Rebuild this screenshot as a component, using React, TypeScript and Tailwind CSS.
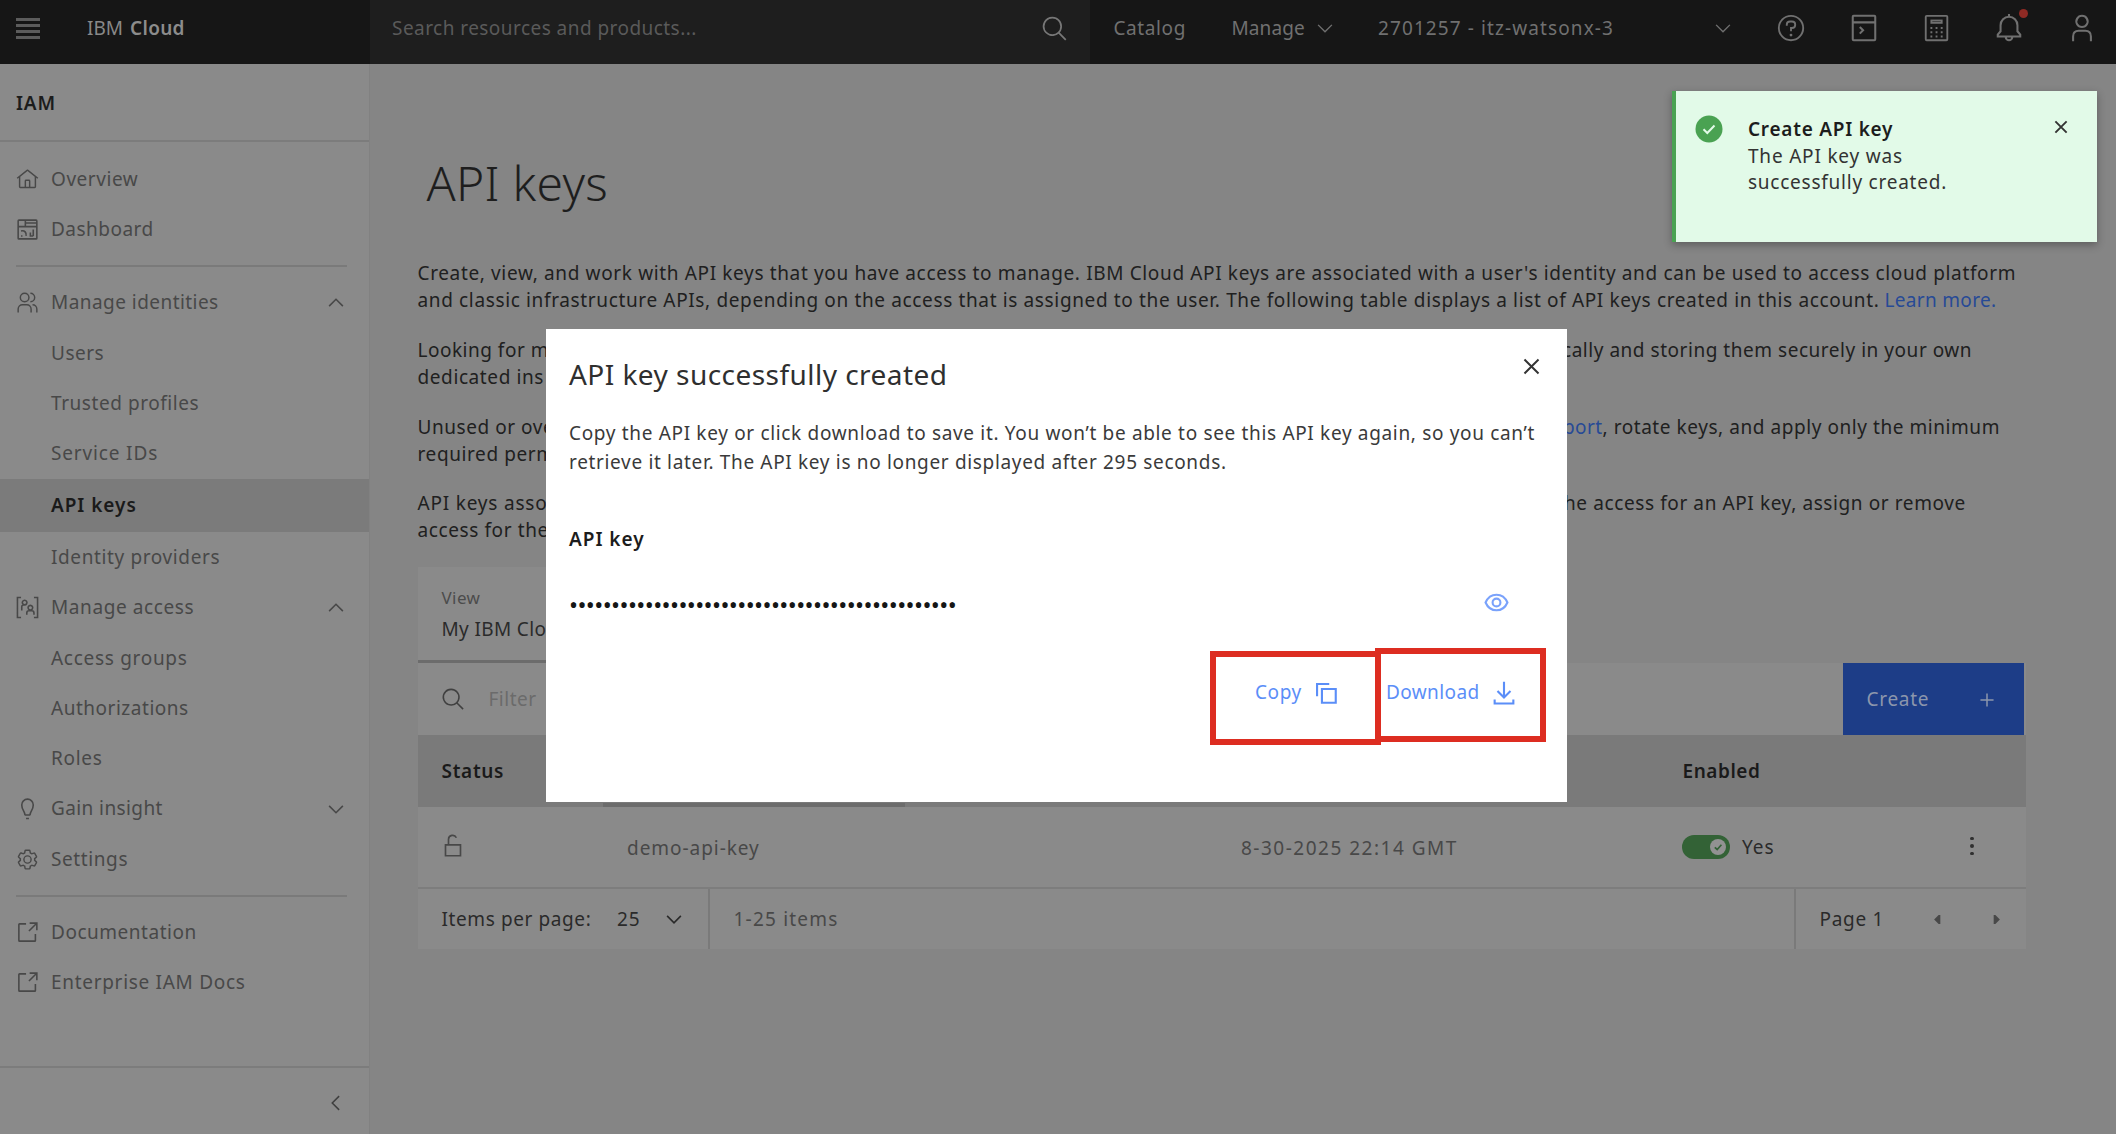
import type { ReactNode } from "react";

function Icon({ className, children }: { className: string; children: ReactNode }) {
  return (
    <svg viewBox="0 0 32 32" fill="currentColor" className={`shrink-0 ${className}`}>
      {children}
    </svg>
  );
}

function Lines({ className, d, width = 2.2 }: { className: string; d: string; width?: number }) {
  return (
    <svg viewBox="0 0 32 32" fill="none" stroke="currentColor" strokeWidth={width} className={`shrink-0 ${className}`}>
      <path d={d} />
    </svg>
  );
}

const SEARCH = "M29,27.5859l-7.5521-7.5521a11.0177,11.0177,0,1,0-1.4141,1.4141L27.5859,29ZM4,13a9,9,0,1,1,9,9A9.01,9.01,0,0,1,4,13Z";
const CHEVRON_DOWN = "M5 11L16 22L27 11";
const CHEVRON_UP = "M5 21L16 10L27 21";

const homeIcon = (
  <Icon className="size-[23px]">
    <path d="M16.6123,2.2138a1.01,1.01,0,0,0-1.2427,0L1,13.4194l1.2427,1.5717L4,13.621V26a2.0041,2.0041,0,0,0,2,2H26a2.0037,2.0037,0,0,0,2-2V13.63L29.7573,15,31,13.4282ZM18,26H14V18h4Zm2,0V18a2.0023,2.0023,0,0,0-2-2H14a2.002,2.002,0,0,0-2,2v8H6V12.0615l10-7.79,10,7.8005V26Z" />
  </Icon>
);
const dashboardIcon = (
  <Lines
    className="size-[23px]"
    d="M4 3H28Q29 3 29 4V28Q29 29 28 29H4Q3 29 3 28V4Q3 3 4 3ZM3 12H29M13 3V12M13 7H29M24 16V25M20 20V25H24M7 18C12 17 15 20 14 25M7 25H9"
  />
);
const usersIcon = (
  <Icon className="size-[23px]">
    <path d="M30 30h-2v-5a5.006 5.006 0 00-5-5v-2a7.008 7.008 0 017 7zM22 30h-2v-5a5.006 5.006 0 00-5-5H9a5.006 5.006 0 00-5 5v5H2v-5a7.008 7.008 0 017-7h6a7.008 7.008 0 017 7zM20 2v2a5 5 0 010 10v2a7 7 0 000-14zM12 4a5 5 0 11-5 5 5 5 0 015-5m0-2a7 7 0 107 7 7 7 0 00-7-7z" />
  </Icon>
);
const accessIcon = (
  <Lines
    className="size-[23px]"
    d="M7 2H2V30H7M25 2H30V30H25M12 6a3.2 3.2 0 1 0 .01 0M8 20V15Q8 12.500 10.500 12.500H13M20 13a3.200 3.200 0 1 0 .01 0M15 26V23.500Q15 20.500 18 20.500H22Q25 20.500 25 23.500V26"
  />
);
const bulbIcon = (
  <Lines className="size-[23px]" d="M12 25H20M14 30H18M12.500 25C12.500 20 8 18 8 11A8 8 0 0 1 24 11C24 18 19.500 20 19.500 25" />
);
const settingsIcon = (
  <Icon className="size-[23px]">
    <path d="M27,16.76c0-.25,0-.5,0-.76s0-.51,0-.77l1.92-1.68A2,2,0,0,0,29.3,11L26.94,7a2,2,0,0,0-1.73-1,2,2,0,0,0-.64.1l-2.43.82a11.35,11.35,0,0,0-1.31-.75l-.51-2.52a2,2,0,0,0-2-1.61H13.64a2,2,0,0,0-2,1.61l-.51,2.52a11.48,11.48,0,0,0-1.32.75L7.43,6.06A2,2,0,0,0,6.79,6,2,2,0,0,0,5.06,7L2.7,11a2,2,0,0,0,.41,2.51L5,15.24c0,.25,0,.5,0,.76s0,.51,0,.77L3.11,18.45A2,2,0,0,0,2.7,21L5.06,25a2,2,0,0,0,1.73,1,2,2,0,0,0,.64-.1l2.43-.82a11.35,11.35,0,0,0,1.31.75l.51,2.52a2,2,0,0,0,2,1.61h4.72a2,2,0,0,0,2-1.61l.51-2.52a11.48,11.48,0,0,0,1.32-.75l2.42.82a2,2,0,0,0,.64.1,2,2,0,0,0,1.73-1L29.3,21a2,2,0,0,0-.41-2.51ZM25.21,24l-3.43-1.16a8.86,8.86,0,0,1-2.71,1.57L18.36,28H13.64l-.71-3.55a9.36,9.36,0,0,1-2.7-1.57L6.79,24,4.43,20l2.72-2.4a8.9,8.9,0,0,1,0-3.13L4.43,12,6.79,8l3.43,1.16a8.86,8.86,0,0,1,2.71-1.57L13.64,4h4.72l.71,3.55a9.36,9.36,0,0,1,2.7,1.57L25.21,8,27.57,12l-2.72,2.4a8.9,8.9,0,0,1,0,3.13L27.57,20Z" />
    <path d="M16,22a6,6,0,1,1,6-6A5.94,5.94,0,0,1,16,22Zm0-10a3.91,3.91,0,0,0-4,4,3.91,3.91,0,0,0,4,4,3.91,3.91,0,0,0,4-4A3.91,3.91,0,0,0,16,12Z" />
  </Icon>
);
const launchIcon = <Lines className="size-[23px]" d="M14 4H5Q4 4 4 5V27Q4 28 5 28H26Q27 28 27 27V18M19 3H29V13M28.500 3.500L18 14" />;

type Item = { label: string; icon?: ReactNode; end?: string; track: string; active?: boolean };

const identity: Item[] = [
  { label: "Manage identities", icon: usersIcon, end: CHEVRON_UP, track: "tracking-[0.45px]" },
  { label: "Users", track: "tracking-[0.5px]" },
  { label: "Trusted profiles", track: "tracking-[0.55px]" },
  { label: "Service IDs", track: "tracking-[0.85px]" },
  { label: "API keys", track: "tracking-[0.95px]", active: true },
  { label: "Identity providers", track: "tracking-[0.62px]" },
  { label: "Manage access", icon: accessIcon, end: CHEVRON_UP, track: "tracking-[0.6px]" },
  { label: "Access groups", track: "tracking-[0.7px]" },
  { label: "Authorizations", track: "tracking-[0.52px]" },
  { label: "Roles", track: "tracking-[0.7px]" },
  { label: "Gain insight", icon: bulbIcon, end: CHEVRON_DOWN, track: "tracking-[0.4px]" },
  { label: "Settings", icon: settingsIcon, track: "tracking-[0.6px]" },
];

function NavItem({ item }: { item: Item }) {
  return (
    <li
      className={`flex shrink-0 items-center pr-[22px] pl-[16px] ${
        item.active ? "h-[53.5px] bg-[#7b7b7b] font-semibold text-[#1a1a1a]" : "h-[50.3px] text-[#484848]"
      }`}
    >
      <span className="flex w-[35px]">{item.icon}</span>
      <span className={`grow ${item.track}`}>{item.label}</span>
      {item.end && <Lines className="mr-[1px] size-[20px]" d={item.end} width={2.5} />}
    </li>
  );
}

function Sidebar() {
  return (
    <nav className="flex w-[370px] shrink-0 flex-col border-r border-[#818181] bg-[#8a8a8a]">
      <div className="flex h-[78px] items-center border-b-2 border-[#7c7c7c] pt-[3px] pl-[16px] font-semibold tracking-[0.8px] text-[#1c1c1c]">
        IAM
      </div>
      <ul className="mt-[12px] flex flex-col">
        <NavItem item={{ label: "Overview", icon: homeIcon, track: "tracking-[0.55px]" }} />
        <NavItem item={{ label: "Dashboard", icon: dashboardIcon, track: "tracking-[0.48px]" }} />
      </ul>
      <hr className="mt-[10.500px] mr-[22px] mb-[10.500px] ml-[16px] border-t-2 border-[#7a7a7a]" />
      <ul className="flex flex-col">
        {identity.map((item) => (
          <NavItem key={item.label} item={item} />
        ))}
      </ul>
      <hr className="mt-[10.500px] mr-[22px] mb-[10.500px] ml-[16px] border-t-2 border-[#7a7a7a]" />
      <ul className="flex flex-col">
        <NavItem item={{ label: "Documentation", icon: launchIcon, track: "tracking-[0.52px]" }} />
        <NavItem item={{ label: "Enterprise IAM Docs", icon: launchIcon, track: "tracking-[0.7px]" }} />
      </ul>
      <div className="mt-auto flex h-[68px] items-center justify-end border-t-2 border-[#7c7c7c] pt-[4px] pr-[23px] text-[#3f3f3f]">
        <Lines className="size-[20px]" d="M21 5L10 16L21 27" width={2.4} />
      </div>
    </nav>
  );
}

function Header() {
  return (
    <header className="flex h-[64px] shrink-0 bg-[#161616] text-[#707070]">
      <div className="flex w-[370px] items-center pb-[8px] pl-[15.500px]">
        <div className="flex w-[24.500px] flex-col gap-[3px]">
          <span className="h-[3px] bg-[#5c5c5c]" />
          <span className="h-[3px] bg-[#5c5c5c]" />
          <span className="h-[3px] bg-[#5c5c5c]" />
          <span className="h-[3px] bg-[#5c5c5c]" />
        </div>
        <span className="ml-[47px] text-[#888888]">IBM</span>
        <span className="ml-[7px] font-semibold tracking-[0.3px] text-[#8c8c8c]">Cloud</span>
      </div>
      <div className="flex w-[720px] items-center bg-[#1e1e1e] pb-[7px] pl-[22px] tracking-[0.45px] text-[#5a5a5a]">
        <span className="w-[649px]">Search resources and products...</span>
        <Icon className="size-[28px] text-[#777777]">
          <path d={SEARCH} />
        </Icon>
      </div>
      <div className="flex grow items-center pb-[8px]">
        <span className="ml-[23.500px] w-[118px] tracking-[0.6px]">Catalog</span>
        <span className="w-[83px] tracking-[0.1px]">Manage</span>
        <Lines className="size-[20px]" d={CHEVRON_DOWN} />
        <span className="ml-[43.500px] w-[335px] tracking-[1.1px]">2701257 - itz-watsonx-3</span>
        <Lines className="size-[20px]" d={CHEVRON_DOWN} />
        <div className="ml-[43px] flex gap-[42.800px]">
          <svg viewBox="0 0 32 32" className="size-[30px]" fill="none" stroke="currentColor" strokeWidth="2">
            <circle cx="16" cy="16" r="13" />
            <path d="M11.500 13.500V12.500Q11.500 9 15 9H17Q20.500 9 20.500 12.500T17 16H16V19.500" />
            <circle cx="16" cy="23.500" r="1.500" fill="currentColor" stroke="none" />
          </svg>
          <Lines className="size-[30px]" d="M5 3H27Q28 3 28 4V28Q28 29 27 29H5Q4 29 4 28V4Q4 3 5 3ZM4 10H28M11.500 15L15 18.500L11.500 22" />
          <svg viewBox="0 0 32 32" className="size-[30px]" fill="none" stroke="currentColor" strokeWidth="2">
            <rect x="4" y="3" width="23" height="26" rx="1" />
            <rect x="10" y="8" width="11" height="2.500" />
            <path d="M9 16H11M14.500 16H16.500M20 16H22M9 20.500H11M14.500 20.500H16.500M20 20.500H22M9 25H11M14.500 25H16.500M20 25H22" />
          </svg>
          <div className="relative">
            <Lines className="size-[30px]" d="M16 1V4M4 25V23L7 19.500V13A9 9 0 0 1 25 13V19.500L28 23V25ZM12.500 25.500A3.500 3.500 0 0 0 19.500 25.500" />
            <span className="absolute -top-[4px] -right-[4px] size-[9px] rounded-full bg-[#8f2a24]" />
          </div>
          <Lines className="size-[30px]" d="M16 3A6 6 0 1 1 15.990 3M6.500 30V25Q6.500 19 12.500 19H19.500Q25.500 19 25.500 25V30" />
        </div>
      </div>
    </header>
  );
}

function Split({ left, leftTrack, children }: { left: string; leftTrack: string; children?: ReactNode }) {
  return (
    <div className="flex h-[26.800px] items-center">
      <span className={`w-[1144.500px] shrink-0 ${leftTrack}`}>{left}</span>
      {children}
    </div>
  );
}

function Intro() {
  return (
    <div className="mt-[47px] flex flex-col gap-[23.100px] text-[#202020]">
      <div className="tracking-[0.64px]">
        <p className="flex h-[26.800px] items-center">
          Create, view, and work with API keys that you have access to manage. IBM Cloud API keys are associated with a user's
          identity and can be used to access cloud platform
        </p>
        <p className="flex h-[26.800px] items-center gap-[5px]">
          <span>
            and classic infrastructure APIs, depending on the access that is assigned to the user. The following table displays a
            list of API keys created in this account.
          </span>
          <span className="tracking-[0.33px] text-[#274a96]">Learn more.</span>
        </p>
      </div>
      <div>
        <Split left="Looking for m" leftTrack="tracking-[0.5px]">
          <span className="tracking-[0.53px]">cally and storing them securely in your own</span>
        </Split>
        <Split left="dedicated ins" leftTrack="tracking-[0.6px]" />
      </div>
      <div>
        <Split left="Unused or ove" leftTrack="tracking-[0.55px]">
          <span className="ml-[1px] tracking-[0.4px] text-[#274a96]">port</span>
          <span className="tracking-[0.56px]">, rotate keys, and apply only the minimum</span>
        </Split>
        <Split left="required perm" leftTrack="tracking-[0.6px]" />
      </div>
      <div>
        <Split left="API keys asso" leftTrack="tracking-[0.8px]">
          <span className="ml-[2px] tracking-[0.6px]">he access for an API key, assign or remove</span>
        </Split>
        <Split left="access for the" leftTrack="tracking-[0.6px]" />
      </div>
    </div>
  );
}

function KeysTable() {
  return (
    <section className="mt-[23px] w-[1608px] text-[#2a2a2a]">
      <div className="flex h-[96px] w-[300px] flex-col justify-center border-b-3 border-[#6c6c6c] bg-[#8a8a8a] pl-[24px]">
        <span className="text-[17px]/[30px] tracking-[0.4px] text-[#4c4c4c]">View</span>
        <span className="leading-[32px] tracking-[0.35px]">My IBM Clo</span>
      </div>
      <div className="flex h-[72px] items-center bg-[#8a8a8a] pl-[23px] text-[#6b6b6b]">
        <Icon className="size-[25px] text-[#404040]">
          <path d={SEARCH} />
        </Icon>
        <span className="ml-[23px] grow pt-[1px] tracking-[0.5px]">Filter</span>
        <button className="mr-[1.500px] flex h-full w-[181px] items-center bg-[#1d3d87] pt-[1px] pl-[23.500px] text-left text-[#8c96ac]">
          <span className="w-[110px] tracking-[0.7px]">Create</span>
          <Lines className="size-[20px]" d="M16 5.500V26.500M5.500 16H26.500" width={2.4} />
        </button>
      </div>
      <div className="flex h-[72px] items-stretch bg-[#7a7a7a] font-semibold text-[#1a1a1a]">
        <span className="flex w-[185px] items-center pl-[24px] tracking-[0.7px]">Status</span>
        <span className="w-[302px] border-b-4 border-[#6c6c6c]" />
        <span className="flex grow items-center pl-[778px] tracking-[0.55px]">Enabled</span>
      </div>
      <div className="flex h-[82px] items-center border-b-2 border-[#7d7d7d] bg-[#8a8a8a] text-[#484848]">
        <div className="w-[209.500px] pl-[23.500px]">
          <Lines className="mb-[2px] size-[24px]" d="M10 14V7A5.500 5.500 0 0 1 20.500 5M6 14.500H26V29H6Z" />
        </div>
        <span className="w-[614px] pt-[3px] tracking-[0.95px]">demo-api-key</span>
        <span className="w-[441px] pt-[3px] tracking-[1.5px]">8-30-2025 22:14 GMT</span>
        <div className="flex h-[24px] w-[48px] items-center justify-end rounded-full bg-[#336236] pr-[4px]">
          <svg viewBox="0 0 16 16" className="size-[16px]">
            <circle cx="8" cy="8" r="8" fill="#929292" />
            <path d="M4.800 8.300L7.200 10.500L11.400 5.800" fill="none" stroke="#336236" strokeWidth="1.700" />
          </svg>
        </div>
        <span className="ml-[12px] w-[228px] pt-[1px] tracking-[1px] text-[#2a2a2a]">Yes</span>
        <div className="flex flex-col gap-[4px] pb-[2px]">
          <span className="size-[3.500px] rounded-full bg-[#303030]" />
          <span className="size-[3.500px] rounded-full bg-[#303030]" />
          <span className="size-[3.500px] rounded-full bg-[#303030]" />
        </div>
      </div>
      <div className="flex h-[60px] items-stretch bg-[#8a8a8a]">
        <div className="flex w-[292.500px] items-center border-r-2 border-[#7a7a7a] pl-[24px]">
          <span className="w-[175.500px] tracking-[0.6px]">Items per page:</span>
          <span className="w-[47px] tracking-[0.9px]">25</span>
          <Lines className="size-[20px]" d={CHEVRON_DOWN} width={2.6} />
        </div>
        <span className="flex grow items-center pl-[23.500px] tracking-[1.2px] text-[#484848]">1-25 items</span>
        <div className="flex w-[232px] items-center border-l-2 border-[#7a7a7a] pl-[24px] text-[#484848]">
          <span className="w-[113px] tracking-[0.7px] text-[#2a2a2a]">Page 1</span>
          <Icon className="w-[9px]">
            <path d="M26 -6L4 16L26 38Z" />
          </Icon>
          <Icon className="ml-[50px] w-[9px]">
            <path d="M6 -6L28 16L6 38Z" />
          </Icon>
        </div>
      </div>
    </section>
  );
}

function Modal() {
  return (
    <div
      role="dialog"
      className="absolute top-[329px] left-[546px] flex h-[473px] w-[1021px] flex-col bg-white pt-[16px] pl-[23px] text-[#3a3a3a]"
    >
      <div className="flex h-[56px] items-center justify-between pr-[23px]">
        <h2 className="pt-[1px] text-[28px] tracking-[0.46px] text-[#2f2f2f]">API key successfully created</h2>
        <Lines className="mb-[14px] size-[25px] text-[#333333]" d="M7 7L25 25M25 7L7 25" width={2.5} />
      </div>
      <p className="mt-[17.500px] flex flex-col leading-[29.500px] tracking-[0.665px]">
        <span>Copy the API key or click download to save it. You won’t be able to see this API key again, so you can’t</span>
        <span>retrieve it later. The API key is no longer displayed after 295 seconds.</span>
      </p>
      <h3 className="mt-[48px] h-[26px] leading-[26px] font-semibold tracking-[0.97px] text-[#1c1c1c]">API key</h3>
      <div className="mt-[36px] flex h-[32px] items-center justify-between pr-[58.500px]">
        <span className="pt-[2px] text-[24px] tracking-[-0.61px] text-[#161616]">
          ••••••••••••••••••••••••••••••••••••••••••••••
        </span>
        <svg viewBox="0 0 32 32" className="mb-[2px] size-[25px] text-[#7aa2fb]" fill="none" stroke="currentColor" strokeWidth="2.700">
          <path d="M2 16C5 9 10 6 16 6S27 9 30 16C27 23 22 26 16 26S5 23 2 16Z" />
          <circle cx="16" cy="16" r="5" />
        </svg>
      </div>
      <div className="mt-[28px] ml-[641px] flex w-[338px] text-[#5b8ef8]">
        <button className="mt-[3px] flex h-[94px] w-[171px] items-center border-6 border-[#dd2d21] pb-[10px] pl-[39px]">
          <span className="w-[57.500px] text-left tracking-[0.6px]">Copy</span>
          <Lines className="size-[26px]" d="M11 11H28V28H11ZM5 20V5H20" width={2.6} />
        </button>
        <button className="-ml-[6px] flex h-[94px] w-[171px] items-center border-6 border-[#dd2d21] pb-[4px] pl-[5px]">
          <span className="w-[105px] text-left tracking-[0.4px]">Download</span>
          <Lines className="size-[26px]" d="M16 2V21M8 13.500L16 21.500L24 13.500M4.500 24V29H27.500V24" width={2.6} />
        </button>
      </div>
    </div>
  );
}

function Toast() {
  return (
    <div
      role="status"
      className="absolute top-[91px] left-[1672px] flex h-[151px] w-[425px] border-l-4 border-[#4aa252] bg-[#e2fae8] pt-[24px] pl-[19px] text-[#333333] shadow-[0_3px_8px_rgba(0,0,0,0.3)]"
    >
      <svg viewBox="0 0 28 28" className="size-[28px] shrink-0">
        <circle cx="14" cy="14" r="13.500" fill="#4aa252" />
        <path d="M8.500 14.200L12.300 18L19.500 10.500" fill="none" stroke="#e2fae8" strokeWidth="2" />
      </svg>
      <div className="ml-[25px] grow pt-[1px] leading-[26.600px]">
        <p className="font-semibold tracking-[0.75px] text-[#1c1c1c]">Create API key</p>
        <p className="tracking-[0.8px]">The API key was</p>
        <p className="tracking-[0.76px]">successfully created.</p>
      </div>
      <Lines className="mr-[24px] size-[24px] text-[#333333]" d="M8.500 8.500L23.500 23.500M23.500 8.500L8.500 23.500" width={2.5} />
    </div>
  );
}

export default function App() {
  return (
    <div className="relative flex h-[1134px] w-[2116px] flex-col overflow-hidden bg-[#858585] font-['Noto_Sans',sans-serif] text-[19px] leading-none whitespace-nowrap">
      <Header />
      <div className="flex grow">
        <Sidebar />
        <main className="grow pt-[87.500px] pl-[47.500px]">
          <h1 className="ml-[9px] h-[62px] text-[48px] leading-[62px] font-light tracking-[0.3px] text-[#1e1e1e]">API keys</h1>
          <Intro />
          <KeysTable />
        </main>
      </div>
      <Modal />
      <Toast />
    </div>
  );
}
